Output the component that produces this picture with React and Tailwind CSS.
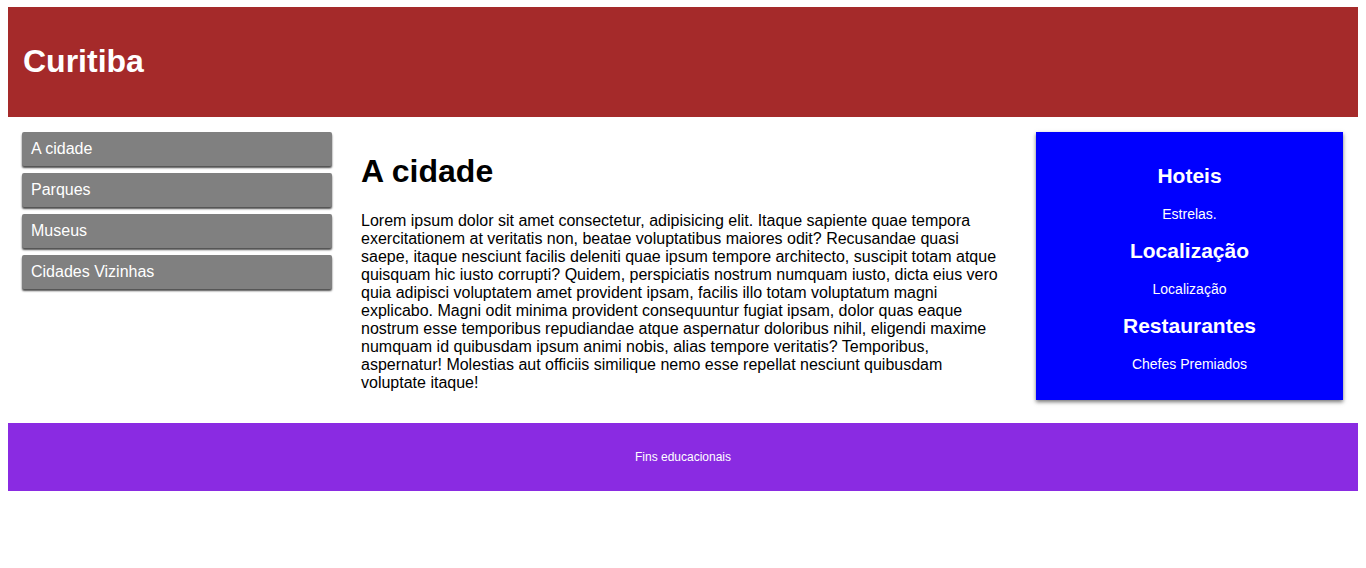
import React from "react";

const NAV_ITEMS = ["A cidade", "Parques", "Museus", "Cidades Vizinhas"];

const ASIDE_ITEMS = [
  { title: "Hoteis", text: "Estrelas." },
  { title: "Localização", text: "Localização" },
  { title: "Restaurantes", text: "Chefes Premiados" },
];

const LOREM =
  "Lorem ipsum dolor sit amet consectetur, adipisicing elit. Itaque sapiente quae tempora exercitationem at veritatis non, beatae voluptatibus maiores odit? Recusandae quasi saepe, itaque nesciunt facilis deleniti quae ipsum tempore architecto, suscipit totam atque quisquam hic iusto corrupti? Quidem, perspiciatis nostrum numquam iusto, dicta eius vero quia adipisci voluptatem amet provident ipsam, facilis illo totam voluptatum magni explicabo. Magni odit minima provident consequuntur fugiat ipsam, dolor quas eaque nostrum esse temporibus repudiandae atque aspernatur doloribus nihil, eligendi maxime numquam id quibusdam ipsum animi nobis, alias tempore veritatis? Temporibus, aspernatur! Molestias aut officiis similique nemo esse repellat nesciunt quibusdam voluptate itaque!";

const App = () => {
  return (
    <div
      className="min-h-screen bg-white text-black px-[8px] pt-[7px]"
      style={{ fontFamily: '"Liberation Sans", Arial, sans-serif' }}
    >
      {/* Header */}
      <header className="h-[110px] bg-[#a52a2a] flex items-center pl-[15px] pb-[1px]">
        <h1 className="text-[32px] leading-[37px] font-bold text-white">
          Curitiba
        </h1>
      </header>

      {/* Body */}
      <div className="flex items-start pt-[15px] pb-[23px]">
        <nav className="w-[310px] ml-[14px] flex flex-col gap-[7px]">
          {NAV_ITEMS.map((item) => (
            <a
              key={item}
              href="#"
              className="h-[34px] flex items-center pl-[9px] bg-[#808080] text-white text-[16px] rounded-[2px] shadow-[0_2px_2px_rgba(0,0,0,0.7)]"
            >
              {item}
            </a>
          ))}
        </nav>

        <main className="flex-1 px-[29px]">
          <h2 className="mt-[21px] text-[32px] leading-[37px] font-bold">
            A cidade
          </h2>
          <p className="mt-[22px] text-[16px] leading-[18px]">{LOREM}</p>
        </main>

        <aside className="w-[307px] mr-[15px] bg-[#0000ff] text-white text-center pt-[32px] pb-[28.5px] flex flex-col gap-[17.5px] shadow-[0_2px_4px_rgba(0,0,0,0.55)]">
          {ASIDE_ITEMS.map((item) => (
            <React.Fragment key={item.title}>
              <h3 className="text-[21px] leading-[24px] font-bold">
                {item.title}
              </h3>
              <p className="text-[14px] leading-[16px]">{item.text}</p>
            </React.Fragment>
          ))}
        </aside>
      </div>

      {/* Footer */}
      <footer className="h-[68px] bg-[#8a2be2] flex items-center justify-center">
        <p className="text-[12px] text-white">Fins educacionais</p>
      </footer>
    </div>
  );
};

export default App;
